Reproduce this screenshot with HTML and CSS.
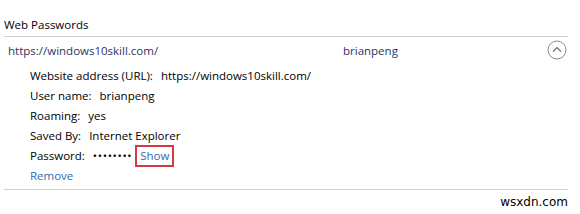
FILE: index.html
```html
<!DOCTYPE html>
<html lang="en">
<head>
  <meta charset="UTF-8" />
  <title>Web Passwords</title>
  <link rel="stylesheet" href="styles.css">
</head>
<body>
  <div class="panel">
    <div class="title">Web Passwords</div>
    <div class="entry">
      <div class="entry-head">
        <span class="site">https://windows10skill.com/</span>
        <span class="user">brianpeng</span>
        <span class="toggle">
          <svg width="20" height="20" viewBox="0 0 20 20">
            <circle cx="10" cy="10" r="9" fill="none" stroke="#8a8a8a" stroke-width="1"/>
            <path d="M6 11.5 L10 7.5 L14 11.5" fill="none" stroke="#6e6e6e" stroke-width="1.2"/>
          </svg>
        </span>
      </div>
      <div class="details">
        <div class="row"><span class="label">Website address (URL):</span><span>https://windows10skill.com/</span></div>
        <div class="row"><span class="label">User name:</span><span>brianpeng</span></div>
        <div class="row"><span class="label">Roaming:</span><span>yes</span></div>
        <div class="row"><span class="label">Saved By:</span><span>Internet Explorer</span></div>
        <div class="row"><span class="label">Password:</span><span class="dots">&bull;&bull;&bull;&bull;&bull;&bull;&bull;&bull;</span><a class="link show">Show</a></div>
        <div class="row"><a class="link">Remove</a></div>
      </div>
    </div>
  </div>
  <div class="watermark">wsxdn.com</div>
</body>
</html>
```

FILE: styles.css
```css
body {
  margin: 0;
  background: #fff;
  font-family: "Open Sans", "Noto Sans", sans-serif;
  font-size: 11.5px;
  color: #000;
}
.panel {
  width: 564px;
  margin-left: 4px;
}
.title {
  padding-top: 15px;
  line-height: 20px;
  padding-bottom: 1px;
  border-bottom: 1px solid #cfcfcf;
}
.entry {
  border-bottom: 1px solid #cfcfcf;
  padding-bottom: 3px;
}
.entry-head {
  display: flex;
  align-items: center;
  height: 26px;
  padding-left: 4px;
}
.site {
  color: #2b3566;
  width: 335px;
}
.user {
  color: #2b3566;
  flex: 1;
}
.toggle {
  display: flex;
  margin-right: 1px;
}
.details {
  padding-top: 3px;
  padding-left: 26px;
}
.row {
  height: 20px;
  line-height: 20px;
  display: flex;
  align-items: center;
}
.label {
  margin-right: 8px;
}
.dots {
  letter-spacing: 0.6px;
  margin-right: 3px;
}
.link {
  color: #2e6bb0;
  cursor: pointer;
}
.show {
  border: 2px solid #d43a42;
  padding: 0 3px;
  line-height: 18px;
}
.watermark {
  width: 568px;
  text-align: right;
  font-family: "DejaVu Sans", sans-serif;
  font-size: 12px;
  line-height: 20px;
  color: #000;
  margin-top: 2px;
}
```
